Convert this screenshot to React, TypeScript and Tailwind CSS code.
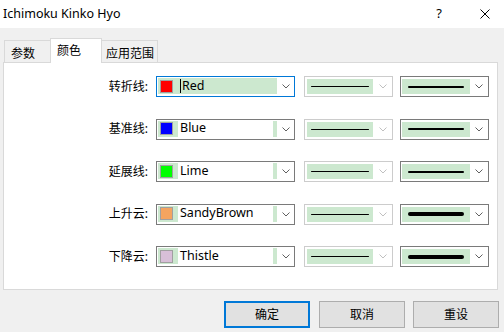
import React from "react";

const FONT = "font-['Segoe_UI','Noto_Sans','Noto_Sans_CJK_SC',sans-serif]";

function Chevron({ color = "#606060" }: { color?: string }) {
  return (
    <svg width="8" height="5" viewBox="0 0 8 5" className="block">
      <path d="M0.5 0.5 L4 4 L7.5 0.5" fill="none" stroke={color} strokeWidth="1" />
    </svg>
  );
}

type Row = { label: string; color: string; name: string; thick: number; focused?: boolean };

const rows: Row[] = [
  { label: "转折线:", color: "#ff0000", name: "Red", thick: 2, focused: true },
  { label: "基准线:", color: "#0000ff", name: "Blue", thick: 2 },
  { label: "延展线:", color: "#00ff00", name: "Lime", thick: 2 },
  { label: "上升云:", color: "#f4a460", name: "SandyBrown", thick: 4 },
  { label: "下降云:", color: "#d8bfd8", name: "Thistle", thick: 4 },
];

function ColorCombo({ row }: { row: Row }) {
  return (
    <div
      className={`ml-[8px] w-[139px] h-[21px] border bg-white flex items-stretch pl-[1px] pt-[1px] pb-[2px] ${
        row.focused ? "border-[#0078d7]" : "border-[#7a7a7a]"
      }`}
    >
      <div className="w-[119px] bg-[#cce8cf] flex items-center pl-[2px]">
        <div className="w-[13px] h-[13px] border border-[#a0a0a0]" style={{ background: row.color }} />
        <div
          className={`ml-[5px] w-[95px] h-[16px] flex items-center pl-[2px] ${
            row.focused ? "bg-[#cce8cf]" : "bg-white"
          }`}
        >
          {row.focused && <div className="w-px h-[14px] bg-black mr-px" />}
          <span className="text-[12.5px] leading-none">{row.name}</span>
        </div>
      </div>
      <div className="flex-1 flex items-center justify-center pt-[1px]">
        <Chevron />
      </div>
    </div>
  );
}

function StyleCombo({ thick, disabled }: { thick: number; disabled?: boolean }) {
  return (
    <div
      className={`w-[89px] h-[21px] border bg-white flex items-stretch ${
        disabled ? "border-[#cccccc] pl-[2px] py-[2px]" : "border-[#7a7a7a] pl-[1px] py-[2px]"
      }`}
    >
      <div
        className={`${disabled ? "w-[66px] px-[4px]" : "w-[68px] px-[6px]"} bg-[#cce8cf] flex items-center`}
      >
        <div className="w-full bg-black rounded-full" style={{ height: thick }} />
      </div>
      <div className="flex-1 flex items-center justify-center">
        <Chevron color={disabled ? "#c0c0c0" : "#606060"} />
      </div>
    </div>
  );
}

export default function App() {
  return (
    <div className={`w-[504px] h-[332px] bg-[#f0f0f0] relative overflow-hidden text-black ${FONT}`}>
      <div className="h-[28px] bg-white flex items-center pl-[3px]">
        <span className="text-[12.5px]">Ichimoku Kinko Hyo</span>
        <span className="ml-auto text-[13px] mr-[38px]">?</span>
        <svg width="10" height="10" viewBox="0 0 10 10" className="mr-[14px]">
          <path d="M0.5 0.5 L9.5 9.5 M9.5 0.5 L0.5 9.5" stroke="#000" strokeWidth="1" />
        </svg>
      </div>

      <div className="pt-[10px] pl-[3px]">
        <div className="flex items-end h-[24px] pl-[1px] text-[12px]">
          <div className="w-[46px] h-[22px] border-l border-t border-[#d9d9d9] pl-[6px] pt-[4px]">参数</div>
          <div className="w-[52px] h-[25px] -mb-px relative z-10 bg-white border-l border-t border-r border-[#d9d9d9] pl-[6px] pt-[3px]">
            颜色
          </div>
          <div className="w-[56px] h-[22px] border-t border-r border-[#d9d9d9] pl-[4px] pt-[4px]">应用范围</div>
        </div>

        <div className="w-[495px] h-[228px] bg-white border border-[#d9d9d9] pt-[13px]">
          <div className="flex flex-col gap-[21.5px]">
            {rows.map((r) => (
              <div key={r.label} className="flex items-center h-[21px]">
                <div className="w-[144px] text-right text-[12px]">{r.label}</div>
                <ColorCombo row={r} />
                <div className="ml-[9px]">
                  <StyleCombo thick={1} disabled />
                </div>
                <div className="ml-[7px]">
                  <StyleCombo thick={r.thick} />
                </div>
              </div>
            ))}
          </div>
        </div>

        <div className="flex justify-end pr-[5px] mt-[11px] text-[12px]">
          <button className="w-[86px] h-[27px] border-2 border-[#0078d7] bg-[#e1e1e1]">确定</button>
          <button className="ml-[9px] w-[86px] h-[27px] border border-[#adadad] bg-[#e1e1e1]">取消</button>
          <button className="ml-[8px] w-[86px] h-[27px] border border-[#adadad] bg-[#e1e1e1]">重设</button>
        </div>
      </div>
    </div>
  );
}
